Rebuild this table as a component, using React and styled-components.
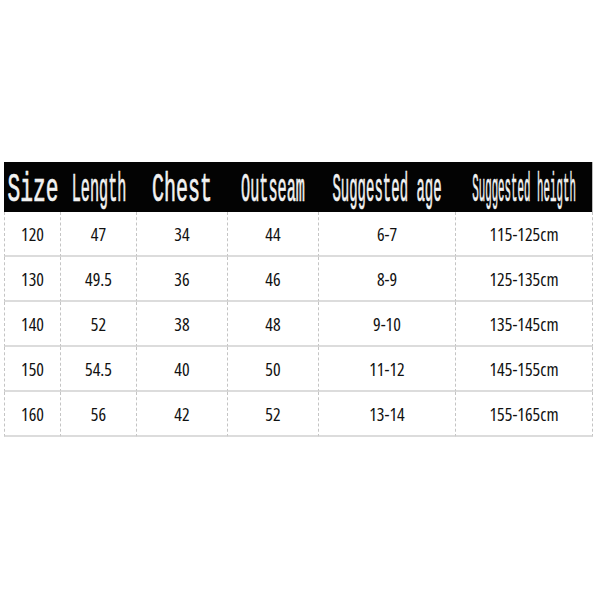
import React from 'react';
import styled, { createGlobalStyle } from 'styled-components';

const Global = createGlobalStyle`
  html, body {
    margin: 0;
    padding: 0;
    background: #fff;
  }
`;

const Page = styled.div`
  width: 600px;
  height: 600px;
  box-sizing: border-box;
  padding: 162px 0 0 4px;
  background: #fff;
`;

const Table = styled.div`
  display: grid;
  grid-template-columns: 57px 76px 91px 91px 137px 137px;
  width: 589px;
`;

const HeadCell = styled.div`
  height: 50px;
  background: #030303;
  display: flex;
  align-items: center;
  justify-content: center;
  overflow: visible;
  border-right: ${p => (p.$last ? '1px solid #bbb' : 'none')};
`;

const HeadText = styled.span`
  display: inline-block;
  white-space: nowrap;
  font-family: "Liberation Mono", "Courier New", monospace;
  font-weight: normal;
  font-size: 40px;
  line-height: 1;
  color: #f2f2f2;
  -webkit-text-stroke: 0.7px #f2f2f2;
  transform: scaleX(${p => p.$scale});
  transform-origin: center;
  margin-top: 7px;
`;

const Cell = styled.div`
  height: 45px;
  box-sizing: border-box;
  display: flex;
  align-items: center;
  justify-content: center;
  border-bottom: 2px solid #dcdcdc;
  border-right: 1px dashed #c4c4c4;
  border-left: ${p => (p.$first ? '1px dashed #c4c4c4' : 'none')};
  font-family: "Open Sans", "Noto Sans", sans-serif;
  font-stretch: 82%;
  font-weight: 500;
  font-size: 18px;
  color: #111;
  padding-top: 1px;
`;

const headers = [
  ['Size', 0.53],
  ['Length', 0.38],
  ['Chest', 0.5],
  ['Outseam', 0.38],
  ['Suggested age', 0.35],
  ['Suggested heigth', 0.27],
];

const rows = [
  ['120', '47', '34', '44', '6-7', '115-125cm'],
  ['130', '49.5', '36', '46', '8-9', '125-135cm'],
  ['140', '52', '38', '48', '9-10', '135-145cm'],
  ['150', '54.5', '40', '50', '11-12', '145-155cm'],
  ['160', '56', '42', '52', '13-14', '155-165cm'],
];

export default function App() {
  return (
    <>
      <Global />
      <Page>
        <Table>
          {headers.map(([label, scale], i) => (
            <HeadCell key={label} $last={i === headers.length - 1}>
              <HeadText $scale={scale}>{label}</HeadText>
            </HeadCell>
          ))}
          {rows.map(row =>
            row.map((v, i) => (
              <Cell key={row[0] + '-' + i} $first={i === 0}>
                {v}
              </Cell>
            ))
          )}
        </Table>
      </Page>
    </>
  );
}
